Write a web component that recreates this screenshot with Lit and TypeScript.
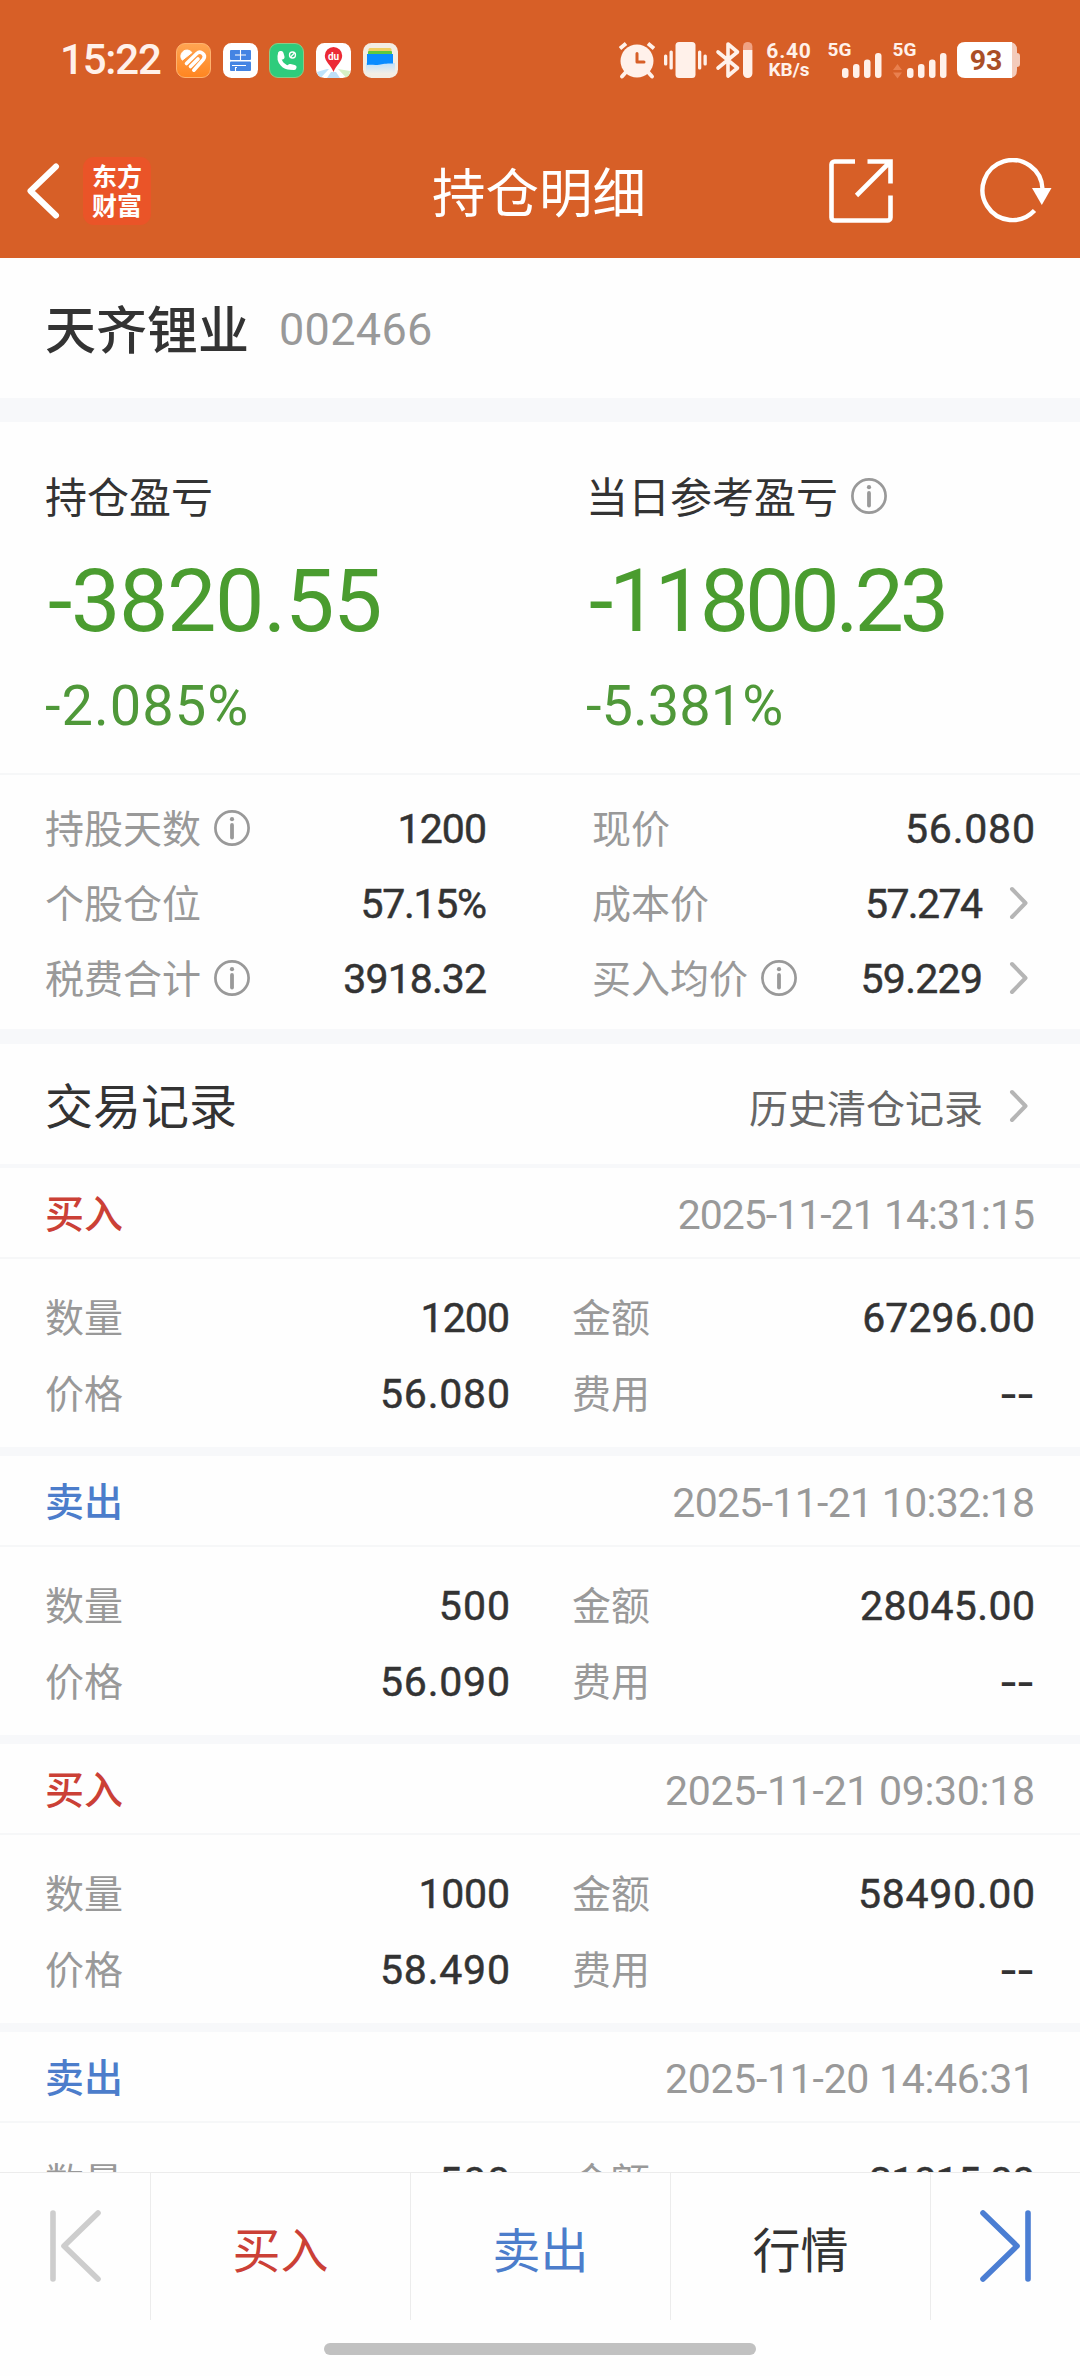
import { LitElement, html, css, svg, TemplateResult } from "lit";
import { customElement, property } from "lit/decorators.js";

/** A figure with its tracking in px. */
type Fig = [text: string, track: number];

interface Trade {
  side: "buy" | "sell";
  time: Fig;
  qty: Fig;
  amount: Fig;
  price: Fig;
}

const TRADES: Trade[] = [
  { side: "buy", time: ["2025-11-21 14:31:15", -1], qty: ["1200", -0.9], amount: ["67296.00", 0.1], price: ["56.080", 0.8] },
  { side: "sell", time: ["2025-11-21 10:32:18", -0.7], qty: ["500", 1], amount: ["28045.00", 0.4], price: ["56.090", 0.8] },
  { side: "buy", time: ["2025-11-21 09:30:18", -0.3], qty: ["1000", -0.2], amount: ["58490.00", 0.7], price: ["58.490", 0.8] },
  { side: "sell", time: ["2025-11-20 14:46:31", -0.3], qty: ["500", 1], amount: ["31015.00", -0.9], price: ["62.030", 0.8] },
];

const num = ([text, track]: Fig, cls = "") =>
  html`<span class="num ${cls}" style="letter-spacing:${track}px;margin-right:${-track}px">${text}</span>`;

const info = html`<svg class="info" width="36" height="36" viewBox="0 0 36 36" fill="none">
  <circle cx="18" cy="18" r="16.6" stroke="#999" stroke-width="2.7" />
  <circle cx="18" cy="9.2" r="2.1" fill="#999" />
  <path d="M18 15v12.5" stroke="#999" stroke-width="3.8" stroke-linecap="round" />
</svg>`;

const chevron = html`<svg class="chev" width="20" height="34" viewBox="0 0 20 34" fill="none">
  <path d="M3 3l13.5 14L3 31" stroke="#b5b5b5" stroke-width="4" stroke-linecap="round" stroke-linejoin="round" />
</svg>`;

@customElement("status-bar")
export class StatusBar extends LitElement {
  static styles = css`
    :host {
      display: flex;
      align-items: center;
      height: 36px;
      padding: 42px 60px 0 60px;
      color: #fff1ea;
      font-family: Roboto, "Noto Sans CJK SC", sans-serif;
    }
    svg { display: block; flex: none; overflow: visible; }
    .time { font-size: 42px; line-height: 36px; font-weight: 500; width: 116px; letter-spacing: -1.2px; white-space: nowrap; }
    .apps { display: flex; gap: 11.7px; }
    .right { display: flex; align-items: center; margin-left: auto; }
    .vibrate { margin: 0 9px 0 8px; }
    .rate {
      display: flex; flex-direction: column; align-items: center;
      width: 48px; margin: 0 15px 0 12px;
      font-size: 21px; line-height: 20px; font-weight: 700; letter-spacing: 0.8px;
    }
    .rate .unit { font-size: 19px; line-height: 18px; letter-spacing: 0; }
    .signal { margin-right: 11px; }
    .signal.last { margin-right: 10px; }
    text { font-family: Roboto, sans-serif; font-weight: 700; }
  `;

  private signal(busy: boolean) {
    return html`<svg class="signal ${busy ? "last" : ""}" width="54" height="36" viewBox="0 0 54 36">
      <text x="-0.500" y="14" font-size="19" fill="#fff1ea">5G</text>
      ${busy ? svg`<path d="M0 28l4.500-6 4.500 6zM0 30.500l4.500 6 4.500-6z" fill="#e9804f" />` : ""}
      <g fill="#fff1ea">
        <rect x="14" y="26" width="6.500" height="10" rx="3" />
        <rect x="25" y="22" width="6.500" height="14" rx="3" />
        <rect x="36" y="17.500" width="6.500" height="18.500" rx="3" />
        <rect x="47" y="11" width="6.500" height="25" rx="3" />
      </g>
    </svg>`;
  }

  render() {
    return html`
      <span class="time">15:22</span>
      <div class="apps">
        <svg width="35" height="35" viewBox="0 0 35 35">
          <defs><linearGradient id="o" x1="0" y1="0" x2="0" y2="1"><stop offset="0" stop-color="#ffa552" /><stop offset="1" stop-color="#ff8520" /></linearGradient></defs>
          <rect x=".5" y=".5" width="34" height="34" rx="8.500" fill="url(#o)" stroke="#ffb26e" />
          <path d="M6.300 17.200a6 6 0 0 1 9.400-8l.3.300z" fill="#fff" stroke="#fff" stroke-linejoin="round" />
          <path d="M10.500 20.500L20.800 10.500c3.700-3.300 9.700 1.200 6.700 5.800L17.800 27.200M14.500 23.500l7.500-7.500" fill="none" stroke="#fff" stroke-width="3.600" stroke-linecap="round" stroke-linejoin="round" />
        </svg>
        <svg width="35" height="35" viewBox="0 0 35 35">
          <rect width="35" height="35" rx="8.500" fill="#fff" />
          <rect x="7" y="7" width="21" height="10" rx="1" fill="#4484e3" />
          <rect x="7" y="18.500" width="21" height="9.500" rx="1" fill="#4484e3" />
          <path d="M17.500 7v10M12 12h11M9 22.500h14M12.500 24.500v4M14 24.500h-2" stroke="#fff" stroke-width="1.100" />
        </svg>
        <svg width="35" height="35" viewBox="0 0 35 35">
          <rect x=".5" y=".5" width="34" height="34" rx="8.500" fill="#2ecc7c" stroke="#8ccb86" />
          <path d="M11 10.500c-2.500 8 4 15.500 13 14" fill="none" stroke="#fff" stroke-width="4" stroke-linecap="round" />
          <path d="M12 10.500l1 3.500M21 23.500l4 1" stroke="#fff" stroke-width="5" stroke-linecap="round" />
          <circle cx="23.500" cy="12" r="3" fill="none" stroke="#fff" stroke-width="1.300" />
          <path d="M21.500 14l4-4" stroke="#fff" stroke-width="1.200" />
        </svg>
        <svg width="35" height="35" viewBox="0 0 35 35">
          <rect width="35" height="35" rx="8.500" fill="#fff" />
          <path d="M1 29l10-3 2 0-8 8.500Q1.500 33 1 29z" fill="#bfe3fa" />
          <path d="M15 29h5l4 6H11z" fill="#bfe0f7" />
          <path d="M22 26l12 2q0 5-4 6.500z" fill="#d6f0c4" />
          <path d="M17.500 4a8.700 8.700 0 0 1 8.700 8.700c0 6-6 9-8.700 16.300-2.700-7.300-8.700-10.300-8.700-16.300A8.700 8.700 0 0 1 17.500 4z" fill="#ec2a35" />
          <text x="17.500" y="17" font-size="10" text-anchor="middle" fill="#fff">du</text>
        </svg>
        <svg width="35" height="35" viewBox="0 0 35 35">
          <defs><linearGradient id="w" x1="0" y1="0" x2="0" y2="1"><stop offset="0" stop-color="#bfe0fb" /><stop offset="1" stop-color="#f5efe4" /></linearGradient></defs>
          <rect width="35" height="35" rx="8.500" fill="#f3ede3" />
          <rect x="5.500" y="5" width="23" height="6" rx="1.500" fill="#f0cf62" />
          <rect x="5" y="8" width="24" height="6" rx="1" fill="#5fc93f" />
          <rect x="3" y="20" width="29" height="11" fill="url(#w)" />
          <path d="M4 11h26v9.500c-8 0-10 .5-14 1.200-4 .5-8-.2-12 .3z" fill="#0a8cff" />
        </svg>
      </div>
      <div class="right">
        <svg width="38" height="36" viewBox="0 0 38 36" fill="none" stroke="#fff1ea" stroke-linecap="round">
          <path d="M2 6.500l6-5M36 6.500l-6-5" stroke-width="3.800" stroke-linecap="butt" />
          <path d="M8 30l-4 4.500M30 30l4 4.500" stroke-width="4" />
          <circle cx="19" cy="19" r="16.500" fill="#fff1ea" stroke="none" />
          <path d="M19 11.500V20h7" stroke="#d75f27" stroke-width="3" stroke-linejoin="round" />
        </svg>
        <svg class="vibrate" width="43" height="36" viewBox="0 0 43 36" fill="#fff1ea">
          <rect x="11.500" y="0" width="20" height="36" rx="3.500" />
          <rect x="5.500" y="8.500" width="3.300" height="19" rx="1.500" /><rect x="0" y="12.500" width="3.300" height="11" rx="1.500" />
          <rect x="34" y="8.500" width="3.300" height="19" rx="1.500" /><rect x="39.500" y="12.500" width="3.300" height="11" rx="1.500" />
        </svg>
        <svg width="37" height="36" viewBox="0 0 37 36" fill="none">
          <path d="M2 10l19.500 16L12 34V2l9.500 8L2 26" stroke="#fff1ea" stroke-width="3.600" stroke-linejoin="round" stroke-linecap="round" />
          <path d="M27 8V4.500a4.700 4.500 0 0 1 9.400 0V8z" fill="#f0a384" />
          <path d="M27 8h9.400v23.500a4.700 4.500 0 0 1-9.400 0z" fill="#fff1ea" />
        </svg>
        <div class="rate"><span>6.40</span><span class="unit">KB/s</span></div>
        ${this.signal(false)} ${this.signal(true)}
        <svg width="63" height="36" viewBox="0 0 63 36">
          <path d="M48 0h4q8 0 8 8v3q3 0 3 3v8q0 3-3 3v3q0 8-8 8h-4z" fill="#f3cbbb" />
          <path d="M8 0h47v36H8q-8 0-8-8V8q0-8 8-8z" fill="#fff" />
          <text x="29" y="28" font-size="28.500" text-anchor="middle" fill="#aa4f26">93</text>
        </svg>
      </div>
    `;
  }
}

@customElement("trade-card")
export class TradeCard extends LitElement {
  @property({ attribute: false }) trade!: Trade;

  static styles = css`
    :host { display: block; border-bottom: 9px solid #f7f8fa; height: 279px; font-size: 39px; }
    .head {
      box-sizing: border-box; height: 91px; padding: 5px 45px 0 45px; border-bottom: 2px solid #f6f7f8;
      display: flex; align-items: center; justify-content: space-between;
    }
    .side { font-weight: 500; line-height: 60px; }
    .buy { color: #cb4036; }
    .sell { color: #4c7dcb; }
    .num { font-size: 41px; -webkit-text-stroke: 0.5px #333; color: #333; white-space: nowrap; line-height: 60px; padding-top: 2px; }
    .num.time { -webkit-text-stroke: 0; color: #999; padding-top: 0; }
    .num.dash { font-family: Inter, sans-serif; font-weight: 500; -webkit-text-stroke: 0; }
    .grid {
      display: grid; grid-template-columns: 465px 463px; column-gap: 62px; grid-auto-rows: 76px;
      padding: 20px 45px 0 45px;
    }
    .cell { display: flex; align-items: center; justify-content: space-between; color: #999; }
    .label { padding-bottom: 4px; }
  `;

  private cell(label: string, value: Fig, cls = "") {
    return html`<div class="cell"><span class="label">${label}</span>${num(value, cls)}</div>`;
  }

  render(): TemplateResult {
    const t = this.trade;
    return html`
      <div class="head">
        <span class="side ${t.side}">${t.side === "buy" ? "买入" : "卖出"}</span>
        ${num(t.time, "time")}
      </div>
      <div class="grid">
        ${this.cell("数量", t.qty)} ${this.cell("金额", t.amount)}
        ${this.cell("价格", t.price)} ${this.cell("费用", ["--", -2], "dash")}
      </div>
    `;
  }
}

@customElement("app-root")
export class AppRoot extends LitElement {
  static styles = css`
    :host {
      display: flex; flex-direction: column; width: 1080px; height: 2376px; overflow: hidden;
      background: #fefefe; color: #333;
      font-family: Roboto, "Noto Sans CJK SC", sans-serif;
    }
    svg { display: block; flex: none; }
    .num { white-space: nowrap; }
    .top { flex: none; height: 258px; background: #d75f27; color: #fff; }
    .nav { display: grid; grid-template-columns: 1fr auto 1fr; align-items: center; height: 67px; padding: 76px 28px 0 26px; }
    .nav-left { display: flex; align-items: center; gap: 23px; }
    .nav-right { display: flex; align-items: center; justify-content: flex-end; gap: 85.500px; }
    .logo {
      box-sizing: border-box;
      display: flex; flex-direction: column; justify-content: center; align-items: center;
      width: 68px; height: 68px; border-radius: 11px; background: #ea5428; padding-bottom: 3px;
      font: 700 25px/29px "Noto Sans CJK SC", sans-serif;
    }
    .title { font-size: 53.500px; line-height: 67px; font-weight: 400; padding-top: 7px; }
    .stock { flex: none; display: flex; align-items: center; height: 140px; padding-left: 45px; border-bottom: 24px solid #f7f8fa; }
    .name { font-size: 51px; font-weight: 500; line-height: 76px; padding-top: 7px; }
    .code { font-size: 45px; color: #999; margin-left: 30px; padding-top: 3px; }
    .pnl { flex: none; display: grid; grid-template-columns: 541px 1fr; height: 351px; padding-left: 45px; border-bottom: 2px solid #f6f7f8; }
    .pnl-col { display: flex; flex-direction: column; align-items: flex-start; padding-top: 44px; }
    .pnl-label { display: flex; align-items: center; gap: 13px; font-size: 42px; line-height: 60px; }
    .pnl-label span { padding-top: 3px; margin-bottom: -3px; }
    .big { font-size: 88px; line-height: 100px; margin: 25px 0 0 3px; color: #4a9c2f; }
    .pct { font-size: 56px; line-height: 70px; margin-top: 20px; color: #4f9839; }
    .details {
      flex: none; display: grid; grid-template-columns: 442px 443px; column-gap: 105px; grid-auto-rows: 75px;
      height: 239px; padding: 15px 45px 0 45px; border-bottom: 15px solid #f7f8fa;
    }
    .detail { display: flex; align-items: center; font-size: 39px; color: #999; }
    .detail .label { padding-bottom: 3px; }
    .detail .info { margin-left: 13px; }
    .detail .num { margin-left: auto; font-size: 41px; -webkit-text-stroke: 0.5px #333; color: #333; padding-top: 2px; }
    .slot { display: flex; align-items: center; margin-left: auto; }
    .chev { margin: 0 6px 0 26px; }
    .records { flex: none; display: flex; align-items: center; justify-content: space-between; height: 120px; padding: 0 45px 0 45px; border-bottom: 4px solid #f7f8fa; }
    .records h2 { margin: 0; font-size: 48px; font-weight: 400; padding-bottom: 2px; }
    .history { display: flex; align-items: center; font-size: 39px; color: #666; padding-top: 4px; }
    .list { flex: 1; min-height: 0; overflow: hidden; }
    .bar {
      flex: none; display: grid; grid-template-columns: 150px 260px 260px 260px 150px; height: 147px;
      border-top: 1px solid #ececec;
    }
    .btn { display: flex; align-items: center; justify-content: center; border-left: 1px solid #ececec; font-size: 48px; }
    .btn.edge { padding-bottom: 2px; }
    .btn.first { border-left: 0; }
    .buy { color: #cb4036; }
    .sell { color: #4c7dcb; }
    .home { flex: none; display: flex; justify-content: center; height: 33px; padding-top: 23px; }
    .pill { width: 432px; height: 12px; border-radius: 6px; background: #c1c1c1; }
  `;

  private detail(label: string, value: Fig, opts: { info?: boolean; link?: boolean } = {}) {
    return html`<div class="detail">
      <span class="label">${label}</span>${opts.info ? info : ""}
      <div class="slot">${num(value)}${opts.link ? chevron : ""}</div>
    </div>`;
  }

  render() {
    return html`
      <header class="top">
        <status-bar></status-bar>
        <div class="nav">
          <div class="nav-left">
            <svg width="34" height="58" viewBox="0 0 34 58" fill="none">
              <path d="M30 4.500L4.500 29 30 53.500" stroke="#fff" stroke-width="6" stroke-linecap="round" stroke-linejoin="round" />
            </svg>
            <div class="logo"><span>东方</span><span>财富</span></div>
          </div>
          <div class="title">持仓明细</div>
          <div class="nav-right">
            <svg width="64" height="64" viewBox="0 0 64 64" fill="none" stroke="#fff" stroke-width="4.600">
              <path d="M26 2.500H5.500a3 3 0 0 0-3 3v53a3 3 0 0 0 3 3h53a3 3 0 0 0 3-3V36.500M38.500 2.500h23V24.500M60.500 3.500L27.500 36.500" />
            </svg>
            <svg width="74" height="66" viewBox="0 0 74 66" fill="none">
              <path d="M56.500 52.500A30 30 0 1 1 64.500 31" stroke="#fff" stroke-width="4.400" />
              <path d="M54 30h19.500l-9.700 17z" fill="#fff" />
            </svg>
          </div>
        </div>
      </header>

      <section class="stock">
        <span class="name">天齐锂业</span>${num(["002466", 0.3], "code")}
      </section>

      <section class="pnl">
        <div class="pnl-col">
          <div class="pnl-label"><span>持仓盈亏</span></div>
          ${num(["-3820.55", -1.4], "big")} ${num(["-2.085%", 1], "pct")}
        </div>
        <div class="pnl-col">
          <div class="pnl-label"><span>当日参考盈亏</span>${info}</div>
          ${num(["-11800.23", -4.2], "big")} ${num(["-5.381%", 0], "pct")}
        </div>
      </section>

      <section class="details">
        ${this.detail("持股天数", ["1200", -0.9], { info: true })}
        ${this.detail("现价", ["56.080", 0.8])}
        ${this.detail("个股仓位", ["57.15%", -1.3])}
        ${this.detail("成本价", ["57.274", -1.6], { link: true })}
        ${this.detail("税费合计", ["3918.32", -0.9], { info: true })}
        ${this.detail("买入均价", ["59.229", -0.7], { info: true, link: true })}
      </section>

      <section class="records">
        <h2>交易记录</h2>
        <div class="history"><span>历史清仓记录</span>${chevron}</div>
      </section>

      <main class="list">${TRADES.map((t) => html`<trade-card .trade=${t}></trade-card>`)}</main>

      <nav class="bar">
        <div class="btn edge first">
          <svg width="54" height="74" viewBox="0 0 54 74" fill="none" stroke="#cdcdcd" stroke-width="5.600" stroke-linecap="round" stroke-linejoin="round">
            <path d="M5 4v66M50 4L16 37l34 33" />
          </svg>
        </div>
        <div class="btn buy">买入</div>
        <div class="btn sell">卖出</div>
        <div class="btn">行情</div>
        <div class="btn edge">
          <svg width="54" height="74" viewBox="0 0 54 74" fill="none" stroke="#4b7ed3" stroke-width="5.600" stroke-linecap="round" stroke-linejoin="round">
            <path d="M49 4v66M4 4l34 33L4 70" />
          </svg>
        </div>
      </nav>
      <div class="home"><div class="pill"></div></div>
    `;
  }
}
